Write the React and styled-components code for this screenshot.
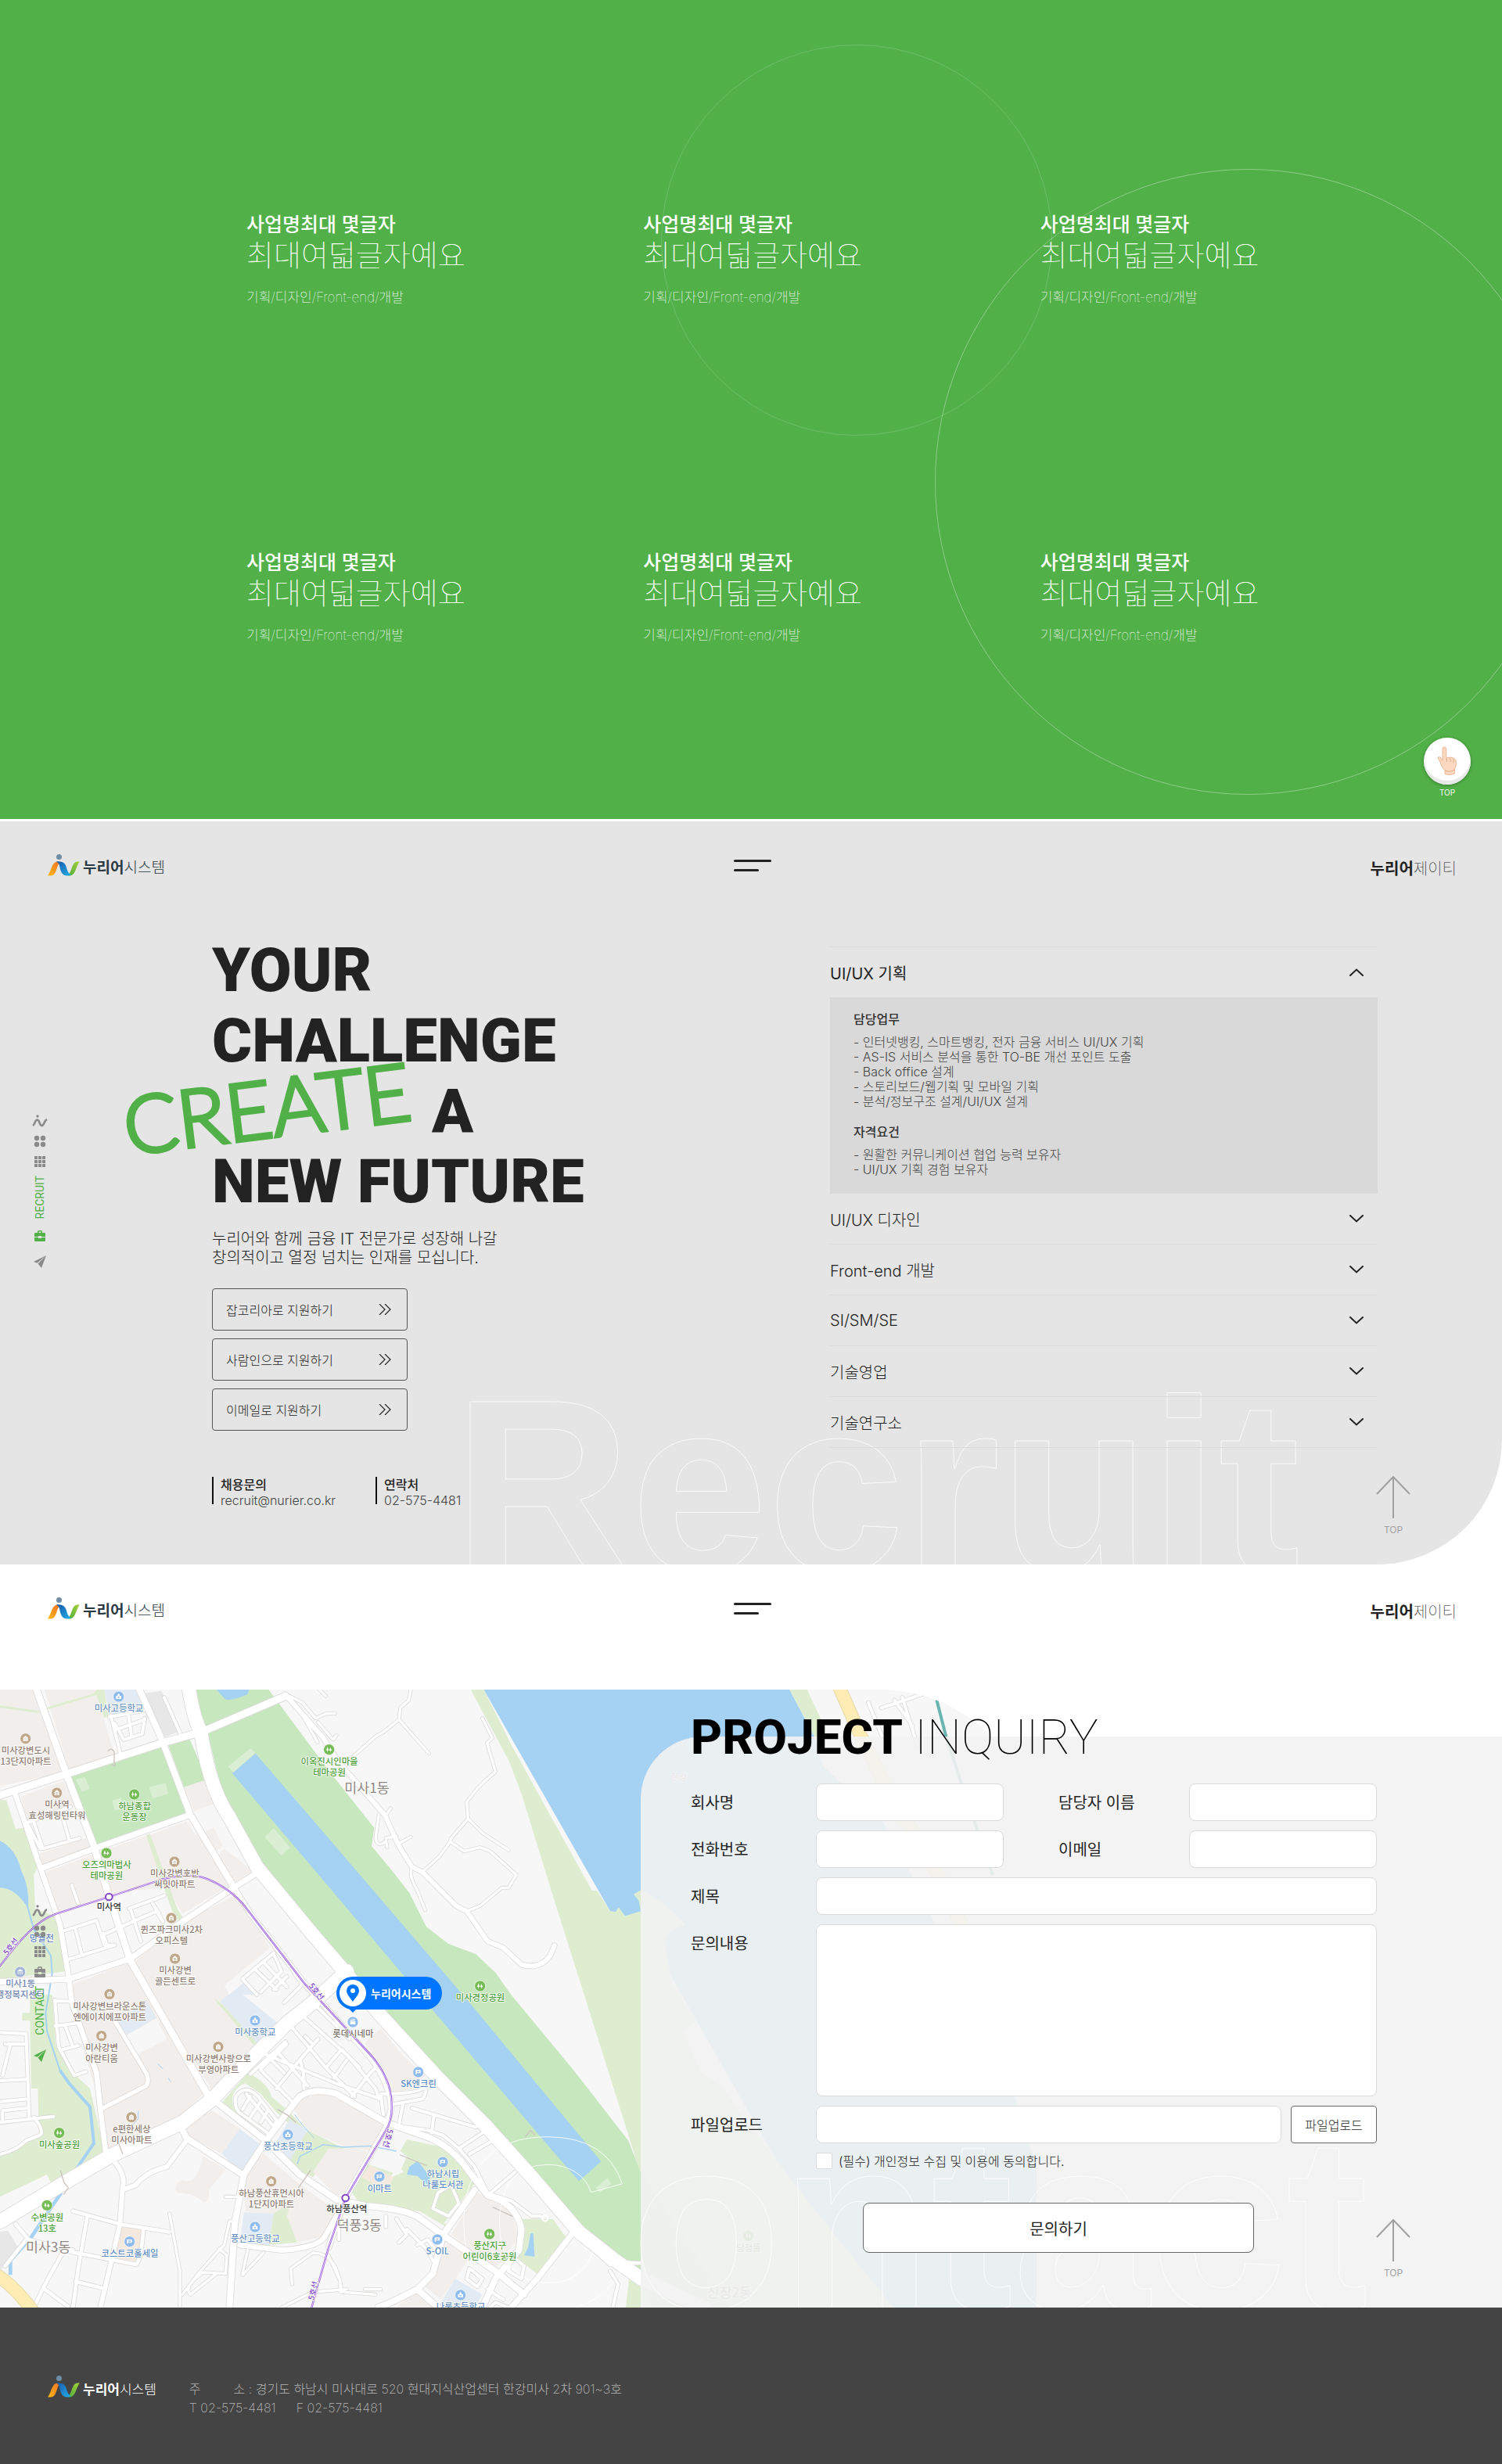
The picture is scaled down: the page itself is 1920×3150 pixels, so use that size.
import React, { useState } from "react";
import styled, { createGlobalStyle, css } from "styled-components";

const GlobalStyle = createGlobalStyle`
  * { box-sizing: border-box; }
  body {
    margin: 0;
    background: #fff;
    color: #222;
    font-family: Inter, "Noto Sans CJK KR", sans-serif;
  }
  h2, h3, p, ul, dl, dd, address { margin: 0; padding: 0; font-style: normal; }
  ul { list-style: none; }
  a { color: inherit; text-decoration: none; }
  button, input, textarea { font: inherit; color: inherit; }
`;

/* ---------- projects ---------- */

const Projects = styled.section`
  position: relative;
  overflow: hidden;
  margin-bottom: 3px;
  padding: 272px 83px 223px 315px;
  background: #51b048;
  color: #fff;
`;

const ProjectGrid = styled.ul`
  position: relative;
  display: grid;
  grid-template-columns: repeat(3, 1fr);
  row-gap: 312px;
`;

const ProjectCard = styled.li`
  display: flex;
  flex-direction: column;
  height: 120px;
`;

const ProjectName = styled.h3`
  font-size: 25px;
  font-weight: 500;
  line-height: 30px;
`;

const ProjectTitle = styled.p`
  font-size: 38px;
  font-weight: 100;
  line-height: 48px;
`;

const ProjectTags = styled.p`
  margin-top: 18px;
  font-size: 17px;
  font-weight: 100;
  line-height: 24px;
`;

const Ring = styled.span`
  position: absolute;
  top: ${(p) => p.$top}px;
  left: ${(p) => p.$left}px;
  width: ${(p) => p.$size}px;
  height: ${(p) => p.$size}px;
  border: 1px solid rgba(255, 255, 255, ${(p) => p.$alpha});
  border-radius: 50%;
`;

const TouchTop = styled.a`
  position: absolute;
  right: 40px;
  bottom: 28px;
  display: flex;
  flex-direction: column;
  align-items: center;
  gap: 4px;
  width: 60px;
  font-size: 10px;
  line-height: 12px;
`;

const TouchDisc = styled.span`
  display: flex;
  align-items: center;
  justify-content: center;
  width: 60px;
  height: 60px;
  border-radius: 50%;
  background: #fff;
  box-shadow: inset 0 -5px 0 #e9e9e9, 0 1px 4px rgba(0, 0, 0, 0.3);
`;

/* ---------- header ---------- */

const Header = styled.header`
  position: relative;
  display: grid;
  grid-template-columns: 1fr auto 1fr;
  align-items: center;
  height: 120px;
  padding: 0 58px 8px 61px;
`;

const Brand = styled.a`
  display: flex;
  align-items: flex-end;
  gap: 4px;
  color: ${(p) => (p.$light ? "#fff" : "#2b3a42")};
  font-size: ${(p) => (p.$light ? 17 : 19)}px;
  font-weight: 300;
  line-height: 20px;
  b { font-weight: 700; }
`;

const MenuButton = styled.button`
  display: flex;
  flex-direction: column;
  gap: 9px;
  width: 48px;
  padding: 0;
  border: 0;
  background: none;
  cursor: pointer;
`;

const MenuBar = styled.span`
  width: ${(p) => p.$w}px;
  height: 3px;
  border-radius: 2px;
  background: #222;
`;

const Partner = styled.a`
  justify-self: end;
  padding-top: 10px;
  font-size: 20px;
  font-weight: 100;
  line-height: 24px;
  b { font-weight: 700; }
`;

/* ---------- side navigation and top link ---------- */

const SideNav = styled.nav`
  position: absolute;
  left: 40px;
  top: ${(p) => p.$top}px;
  z-index: 3;
  display: flex;
  flex-direction: column;
  align-items: center;
  gap: 10px;
  width: 22px;
  color: #8a8a8a;
`;

const SideLink = styled.a`
  display: flex;
  flex-direction: column;
  align-items: center;
  gap: 14px;
  margin-bottom: ${(p) => (p.$active ? 7 : 0)}px;
  color: ${(p) => (p.$active ? "#51b048" : "inherit")};
  svg { display: block; }
  &:last-child { gap: 18px; }
`;

const SideText = styled.span`
  writing-mode: vertical-rl;
  transform: rotate(180deg);
  font-family: Roboto, sans-serif;
  font-size: 14px;
  line-height: 16px;
`;

const TopLink = styled.a`
  position: absolute;
  top: 837px;
  right: 117px;
  z-index: 3;
  display: flex;
  flex-direction: column;
  align-items: center;
  gap: 8px;
  width: 44px;
  color: #a0a0a0;
  font-size: 12px;
  line-height: 14px;
`;

const Watermark = styled.span`
  position: absolute;
  top: ${(p) => p.$top}px;
  left: 580px;
  color: transparent;
  font-family: "Liberation Sans", sans-serif;
  font-size: 314px;
  font-weight: 700;
  line-height: 314px;
  white-space: nowrap;
  pointer-events: none;
  -webkit-text-stroke: 1px rgba(255, 255, 255, 0.85);
`;

/* ---------- recruit ---------- */

const Recruit = styled.section`
  position: relative;
  overflow: hidden;
  min-height: 950px;
  border-bottom-right-radius: 160px;
  background: #e5e5e5;
`;

const RecruitBody = styled.div`
  position: relative;
  display: grid;
  grid-template-columns: 1fr 700px;
  align-items: start;
  padding: 25px 159px 0 271px;
`;

const Slogan = styled.h2`
  display: flex;
  flex-direction: column;
  font-family: Roboto, sans-serif;
  font-size: 78px;
  font-weight: 900;
  line-height: 91px;
`;

const SloganLine = styled.span`
  position: relative;
  height: 90px;
  padding-left: ${(p) => p.$indent || 0}px;
`;

const Handwritten = styled.span`
  position: absolute;
  left: -114px;
  top: -10px;
  color: #51b048;
  font-family: Lato, sans-serif;
  font-size: 102px;
  font-weight: 300;
  line-height: 100px;
  transform: rotate(-7deg);
  -webkit-text-stroke: 5px #51b048;
  stroke-linejoin: round;
`;

const Lead = styled.p`
  margin-top: 17px;
  font-size: 20px;
  font-weight: 300;
  line-height: 24px;
`;

const ApplyList = styled.div`
  display: flex;
  flex-direction: column;
  gap: 10px;
  width: 250px;
  margin-top: 27px;
`;

const ApplyLink = styled.a`
  display: flex;
  align-items: center;
  justify-content: space-between;
  height: 54px;
  padding: 0 20px 0 17px;
  border: 1px solid #555;
  border-radius: 4px;
  font-size: 16px;
  font-weight: 300;
`;

const ContactList = styled.dl`
  display: grid;
  grid-template-columns: 209px 209px;
  margin-top: 59px;
`;

const ContactItem = styled.div`
  position: relative;
  padding-left: 11px;
  font-size: 16px;
  line-height: 20px;
  &::before {
    content: "";
    position: absolute;
    inset: 0 auto 5px 0;
    width: 2px;
    background: #111;
  }
  dt { font-weight: 500; }
  dd { font-weight: 300; color: #444; }
`;

const Accordion = styled.div`
  margin-top: 15px;
  border-top: 1px solid #dbdbdb;
`;

const AccordionButton = styled.button`
  display: flex;
  align-items: center;
  justify-content: space-between;
  width: 100%;
  height: 65px;
  padding: 0 18px 0 0;
  border: 0;
  border-bottom: 1px solid #dbdbdb;
  background: none;
  font-size: 20px;
  font-weight: ${(p) => (p.$open ? 400 : 300)};
  cursor: pointer;
`;

const AccordionPanel = styled.div`
  margin-top: -1px;
  padding: 18px 30px 21px;
  background: #d9d9d9;
  font-size: 16px;
  color: #444;
`;

const PanelTitle = styled.h3`
  font-size: 16px;
  font-weight: 500;
  line-height: 20px;
  color: #333;
  &:not(:first-child) { margin-top: 19px; }
`;

const PanelList = styled.ul`
  margin-top: 10px;
  font-weight: 300;
  line-height: 19px;
`;

/* ---------- contact ---------- */

const Contact = styled.section`
  position: relative;
  overflow: hidden;
`;

const Stage = styled.div`
  position: relative;
  margin-top: 40px;
  padding-top: 60px;
`;

const MapFrame = styled.div`
  position: absolute;
  top: 0;
  left: 0;
  width: 1325px;
  height: 100%;
  overflow: hidden;
  border-top-right-radius: 200px;
  background: #f7f7f7;
  svg { display: block; }
`;

const Marker = styled.a`
  position: absolute;
  left: 430px;
  top: 367px;
  display: flex;
  align-items: center;
  gap: 6px;
  height: 42px;
  padding: 0 14px 0 4px;
  border-radius: 21px;
  background: #0075ff;
  color: #fff;
  font-size: 14px;
  font-weight: 700;
  white-space: nowrap;
  &::after {
    content: "";
    position: absolute;
    left: 16px;
    top: 41px;
    border: 5px solid transparent;
    border-top-color: #0075ff;
    border-bottom: 0;
  }
`;

const MarkerDot = styled.span`
  display: flex;
  align-items: center;
  justify-content: center;
  width: 34px;
  height: 34px;
  border-radius: 50%;
  background: #fff;
`;

const Panel = styled.div`
  position: relative;
  margin-left: 819px;
  padding: 0 160px 70px 64px;
  border-top-left-radius: 80px;
  background: rgba(242, 242, 242, 0.9);
`;

const InquiryTitle = styled.h2`
  position: relative;
  top: -37px;
  margin-bottom: -16px;
  color: #000;
  font-family: Roboto, sans-serif;
  font-size: 62px;
  font-weight: 100;
  line-height: 76px;
  b { font-weight: 800; }
`;

const Form = styled.form`
  position: relative;
  z-index: 2;
`;

const Fields = styled.div`
  display: grid;
  grid-template-columns: 160px 1fr 237px 1fr;
  grid-template-rows: repeat(3, 48px) 220px 48px 20px;
  row-gap: 12px;
`;

const Label = styled.label`
  padding-left: ${(p) => (p.$second ? 70 : 0)}px;
  font-size: 20px;
  font-weight: 400;
  line-height: 50px;
`;

const box = css`
  width: 100%;
  min-width: 0;
  border: 1px solid #dadada;
  border-radius: 8px;
  background: #fff;
  padding: 0 12px;
  font-size: 16px;
  outline: none;
`;

const TextBox = styled.input`
  ${box}
  height: 48px;
  ${(p) => p.$wide && "grid-column: 2 / -1;"}
`;

const TextArea = styled.textarea`
  ${box}
  display: block;
  grid-column: 2 / -1;
  height: 220px;
  padding: 12px;
  resize: none;
`;

const FileRow = styled.div`
  grid-column: 2 / -1;
  display: flex;
  gap: 12px;
`;

const UploadButton = styled.button`
  flex: none;
  width: 110px;
  height: 48px;
  padding: 0;
  border: 1px solid #666;
  border-radius: 4px;
  background: #fff;
  font-size: 16px;
  font-weight: 300;
  cursor: pointer;
`;

const Consent = styled.label`
  grid-column: 2 / -1;
  display: flex;
  align-items: center;
  gap: 8px;
  height: 20px;
  font-size: 16px;
  font-weight: 300;
`;

const Tick = styled.input`
  appearance: none;
  width: 21px;
  height: 21px;
  margin: 0;
  border: 1px solid #dadada;
  border-radius: 2px;
  background: #fff;
  &:checked { background: #51b048; }
`;

const SubmitButton = styled.button`
  display: block;
  width: 500px;
  height: 64px;
  margin: 44px 0 0 220px;
  border: 1px solid #666;
  border-radius: 8px;
  background: #fff;
  font-size: 20px;
  font-weight: 400;
  cursor: pointer;
`;

/* ---------- footer ---------- */

const Footer = styled.footer`
  display: flex;
  align-items: flex-start;
  gap: 42px;
  height: 200px;
  padding: 87px 61px 0;
  background: #444;
`;

const Address = styled.address`
  padding-top: 5px;
  color: #b4b4b4;
  font-size: 16px;
  font-weight: 200;
  line-height: 24px;
`;

const AddressLine = styled.p`
  display: flex;
  gap: ${(p) => p.$gap}px;
`;

/* ---------- drawings ---------- */

const BrandMark = ({ id }) => (
  <svg width="41" height="28" viewBox="0 0 41 28" aria-hidden="true">
    <defs>
      <linearGradient id={id + "o"} x1="0" y1="1" x2="1" y2="0">
        <stop offset="0" stopColor="#fdb913" />
        <stop offset="1" stopColor="#f0702a" />
      </linearGradient>
      <linearGradient id={id + "b"} x1="0" y1="0" x2="1" y2="1">
        <stop offset="0" stopColor="#1c56a7" />
        <stop offset="1" stopColor="#1fb0ea" />
      </linearGradient>
      <linearGradient id={id + "g"} x1="0" y1="1" x2="1" y2="0">
        <stop offset="0" stopColor="#4fae3c" />
        <stop offset="1" stopColor="#a6d13a" />
      </linearGradient>
    </defs>
    <circle cx="14.5" cy="3.5" r="3.5" fill="#6f8ea6" />
    <path d="M0 27.5C5 21 5 9.500 13 9.500L16 10.500C11 13 12 27.500 4 27.500Z" fill={`url(#${id}o)`} />
    <path d="M26 27.500C31 22 31 9.500 38 9.500H41C36 15 36 27.500 28 27.500Z" fill={`url(#${id}g)`} />
    <path d="M11 9.500C20 8.500 23 12 24.500 19C25.200 22 27 25 30 26.500C22 29 18 26.500 16 19C15 14 14.500 11 11 9.500Z" fill={`url(#${id}b)`} />
  </svg>
);

const SideMark = () => (
  <svg width="20" height="16" viewBox="0 0 20 16" fill="none" stroke="currentColor" aria-hidden="true">
    <circle cx="7" cy="2" r="1.700" fill="currentColor" stroke="none" />
    <path d="M1 14C4 12 3.500 7 6.500 6.500C10 6.500 9 14 12.500 14C16 13.500 15 7.500 19 6" strokeWidth="2.600" />
  </svg>
);

const DotsIcon = () => (
  <svg width="16" height="16" viewBox="0 0 16 16" fill="currentColor" aria-hidden="true">
    <circle cx="4" cy="4" r="3.200" /><circle cx="12" cy="4" r="3.200" />
    <circle cx="4" cy="12" r="3.200" /><circle cx="12" cy="12" r="3.200" />
  </svg>
);

const GridIcon = () => (
  <svg width="16" height="16" viewBox="0 0 16 16" fill="currentColor" aria-hidden="true">
    {[0, 1, 2].map((r) => [0, 1, 2].map((c) => (
      <rect key={`${r}${c}`} x={1 + c * 5} y={1 + r * 5} width="4" height="4" />
    )))}
  </svg>
);

const CaseIcon = () => (
  <svg width="16" height="16" viewBox="0 0 16 16" fill="currentColor" aria-hidden="true">
    <path d="M5 4V2.500Q5 1 6.500 1H9.500Q11 1 11 2.500V4H14Q15 4 15 5V9H10V8H6V9H1V5Q1 4 2 4ZM6.500 4H9.500V2.500H6.500Z" fillRule="evenodd" />
    <path d="M1 10H6V11H10V10H15V14Q15 15 14 15H2Q1 15 1 14Z" />
  </svg>
);

const PlaneIcon = () => (
  <svg width="16" height="16" viewBox="0 0 16 16" fill="currentColor" aria-hidden="true">
    <path d="M16 0L0 8L4.500 9.800ZM16 0L5.500 10.500L10 16Z" />
  </svg>
);

const Chevron = ({ up }) => (
  <svg width="18" height="10" viewBox="0 0 18 10" fill="none" stroke="#222" strokeWidth="2" strokeLinecap="round" aria-hidden="true">
    <path d={up ? "M1 9L9 1.500L17 9" : "M1 1L9 8.500L17 1"} />
  </svg>
);

const DoubleArrow = () => (
  <svg width="16" height="14" viewBox="0 0 16 14" fill="none" stroke="#222" strokeWidth="1.200" aria-hidden="true">
    <path d="M1 0L8 7L1 14M8 0L15 7L8 14" />
  </svg>
);

const UpArrow = () => (
  <svg width="44" height="54" viewBox="0 0 44 54" fill="none" stroke="currentColor" strokeWidth="2" aria-hidden="true">
    <path d="M22 54V1M1 23L22 1L43 23" />
  </svg>
);

const Hand = () => (
  <svg width="26" height="38" viewBox="0 0 26 38" aria-hidden="true">
    <path
      d="M7 3Q7 1 9 1Q11.500 1 11.500 3L12 15Q17 13 21 15Q25 17 24.500 22Q24 27 22.500 30V35Q16 38 10 35.500V31Q5 26 4 20L1.500 16Q0.500 13.500 3 13.500Q5 14 7 18Z"
      fill="#fbd9c0"
      stroke="#e9b99a"
      strokeWidth="1"
    />
    <path d="M12 15L12.500 20M16 15Q18 17 17 20M20.500 16Q22 18 21 21M10 31Q16 34 22.500 30" fill="none" stroke="#e3a988" strokeWidth="1" />
  </svg>
);

const PinIcon = () => (
  <svg width="16" height="22" viewBox="0 0 16 22" aria-hidden="true">
    <path d="M8 0A8 8 0 0 1 16 8C16 13 11 17 8 22C5 17 0 13 0 8A8 8 0 0 1 8 0Z" fill="#0075ff" />
    <circle cx="8" cy="8" r="3" fill="#fff" />
  </svg>
);

/* ---------- map ---------- */

const AREAS = [
  ["#a5d2f3", "M1855 30H3028L3123 210L3154 320L3386 540L3500 750L3586 930L3700 1300L3891 1592L3944 1771L3975 1850V2400H3300L2500 1000L2340 880Z"],
  ["#deedcf", "M3028 30H3095L3165 180V220L3123 210Z"],
  ["#deedcf", "M1805 30H1855L1960 240L2120 530L2270 800L2290 802L2340 880L2362 882L2372 865L2398 898L2457 880L2450 840L2430 815L2460 797L2544 850L2628 930L2565 960L2550 1000L2575 1160L2670 1300L2617 1340L2690 1500L2775 1560L2838 1655L2912 1750L3090 1981L3300 2244L3428 2400H2400L2457 1880L2445 1850L2240 1200L2120 820L2000 430L1950 300Z"],
  ["#f2eeeb", "M0 30H135L240 350L0 400Z"],
  ["#f2eeeb", "M170 30H365L440 285L265 335Z"],
  ["#deedcf", "M0 90L150 112V120L0 100ZM180 98L360 45L370 30H400L415 130L400 140L370 50L185 106Z"],
  ["#e2eaf3", "M400 30H530L545 100L420 130Z"],
  ["#e7e7e7", "M545 45L620 35L690 190L625 215L560 130Z"],
  ["#c7e7be", "M270 365L620 250L720 500L365 625Z"],
  ["#d9eed2", "M290 375L325 365L345 410L315 422ZM572 405L635 388L645 430L585 448ZM430 455L465 445L475 485L440 495Z"],
  ["#c7e7be", "M645 240L725 215L795 375L705 405Z"],
  ["#f2eeeb", "M705 405L790 375L830 465L745 495Z"],
  ["#c7e7be", "M740 30H1030L1260 340L1435 560L1425 630L1500 720L1570 810L1635 940L1720 1005L1825 1045L1900 1115L1960 1200L2200 1490L2410 1760L2457 1880L2800 2400H2500L2457 2260L2360 2220L2240 2120L2060 1900L1840 1680L1660 1500L1460 1260L1320 1090L1130 870L980 700L870 500L800 210L760 130Z"],
  ["#a5d2f3", "M830 30H955L950 48Q880 78 862 65Z"],
  ["#a5d2f3", "M890 350L980 275L1260 600L1800 1230L2305 1840L2220 1915L2120 1800L1660 1260L1260 785Z"],
  ["#d9eed2", "M875 325L960 255L980 272L895 348ZM1015 595L1050 562L1113 635L1078 667ZM2285 1940L2330 1903L2345 1925L2300 1960Z"],
  ["#deedcf", "M0 450L25 455L60 565L95 560L150 700L130 740L135 870L215 900L262 1110L0 1140Z"],
  ["#a5d2f3", "M0 610Q60 640 80 720Q115 790 108 870Q60 790 0 790Z"],
  ["#deedcf", "M115 1200H200L215 1400L290 1510L345 1560L400 1800L200 1930L180 1890L0 1975V1810L150 1740L145 1560H120L115 1300H85V1270H115Z"],
  ["#e7e7e7", "M0 2110L30 2105L70 2170L0 2260Z"],
  ["#f2eeeb", "M80 440L245 380L290 480L105 540Z"],
  ["#f2eeeb", "M150 660L330 600L345 640L155 710Z"],
  ["#f2eeeb", "M175 730L390 650L560 590L650 790L500 800L225 880Z"],
  ["#f2eeeb", "M570 590L715 535L880 780L700 890L650 800Z"],
  ["#f2eeeb", "M740 590L820 560L855 630L790 680ZM860 640L970 725L895 770L810 690Z"],
  ["#deedcf", "M560 588L575 583L680 870L860 1165L845 1175L660 880Z"],
  ["#f2eeeb", "M510 1080L690 930L905 815L1035 1020L860 1165L985 1400L810 1560L580 1200Z"],
  ["#f2eeeb", "M280 1160L490 1080L560 1200L780 1580L680 1680L415 1790L385 1640L280 1250Z"],
  ["#e2eaf3", "M450 1310L560 1220L600 1290L485 1355Z"],
  ["#f7f7f7", "M485 1355L600 1290L640 1370L525 1430Z"],
  ["#e2eaf3", "M845 1225L905 1180L1080 1320L990 1395ZM880 1200L940 1150L985 1200Z"],
  ["#deedcf", "M820 1215L850 1235L990 1390L980 1402ZM950 1500Q1030 1540 1040 1590L1110 1650L1200 1750L1180 1760L1060 1650L1000 1580L940 1540Q870 1570 900 1640L980 1690L970 1700L850 1615Z"],
  ["#f2eeeb", "M700 1700L810 1640L920 1715L850 1810L725 1745Z"],
  ["#e2eaf3", "M920 1715L1005 1780L930 1890L850 1810Z"],
  ["#f2eeeb", "M780 1820L865 1870L800 1950Q810 1990 780 1998Q750 1960 680 1960Q660 1930 700 1910Q740 1930 760 1880Z"],
  ["#f2eeeb", "M1010 1810L1140 1920L1100 2050L940 2030V1880Z"],
  ["#e2eaf3", "M935 2035L1050 2040L1030 2160H920Z"],
  ["#deedcf", "M1100 2005L1140 2150L1030 2160L1050 2040Z"],
  ["#f2eeeb", "M1140 1920L1290 2030L1230 2130L1140 2150L1100 2050Z"],
  ["#f2eeeb", "M1120 1630L1170 1570Q1220 1560 1320 1610L1480 1690L1440 1800L1340 1790L1180 1720Z"],
  ["#deedcf", "M1180 1720L1320 1790L1250 1840L1200 1900L1110 1860L1040 1800L1060 1790Z"],
  ["#e2eaf3", "M1110 1680L1180 1720L1110 1840L1050 1780Z"],
  ["#f2eeeb", "M1200 1880L1260 1790L1360 1790L1410 1800L1320 1960L1290 1970Z"],
  ["#f2eeeb", "M1400 1385L1460 1330L1550 1440L1630 1510L1590 1560L1500 1575L1480 1500Z"],
  ["#deedcf", "M1560 1755L1720 1790L1820 1920L1870 1990L1710 2090L1610 2030L1380 2000L1350 1960L1410 1850L1530 1890L1560 1820L1535 1800Z"],
  ["#f7f7f7", "M1520 1850L1550 1880L1500 1900ZM1820 1925L1870 1950L1780 2060L1700 2080Z"],
  ["#f3e9df", "M1420 1855L1510 1900L1485 1955L1385 1900Z"],
  ["#a5d2f3", "M1570 1860L1600 1838L1612 1850L1650 1900L1640 1930L1600 1895L1560 1890Z"],
  ["#f2eeeb", "M1830 1960L1960 2030L1990 2130L1900 2250L1730 2120Z"],
  ["#deedcf", "M2000 2060H2120L2170 2130L2060 2270L1980 2210Z"],
  ["#a5d2f3", "M2035 2115H2045L2050 2205L2010 2200L2025 2170Z"],
  ["#f2eeeb", "M1720 2150L1800 2210L1690 2370L1620 2310Z"],
  ["#f2eeeb", "M1520 2400L1600 2330L1700 2400Z"],
  ["#e2eaf3", "M1745 2290L1850 2350L1820 2400H1680Z"],
  ["#f4e9df", "M465 2085L548 2100L525 2225L440 2210Z"],
];

const STREAMS = [
  [6, "M105 860L130 950L195 1050L200 1120L175 1270L180 1340L230 1490"],
  [12, "M230 1490L265 1540L345 1630L360 1770L285 1880"],
  [14, "M235 1960L200 2010L120 2130L40 2220V2275"],
  [4, "M1140 1850L1150 1820L1240 1775L1320 1785L1420 1780L1520 1800"],
  [3, "M1130 1660L1160 1700L1205 1750M530 1645V1675L500 1710M605 1465L625 1485M645 1520L655 1535"],
];

const ROADS = [
  [10, "M1575 30L1568 70L1535 100L1530 145L1475 190L1440 210L1350 290M1530 145L1645 275M1850 140L1888 215L1868 235L1900 345L1865 375L1830 410L1790 460L1795 525L1730 600L1725 615L1685 670L1620 730M1795 525L1850 580L1950 645M1728 615L1780 650L1840 635L1880 650L1980 740L1950 790L1925 790L1840 860L1790 880M1580 710Q1565 740 1600 800L1630 875M1453 510L1440 600Q1450 640 1480 610L1485 635M1480 600L1520 592M1530 620L1575 595M1475 520L1498 485M1280 220L1290 205"],
  [10, "M1100 50L1150 110L1218 232M1110 55L1160 80L1210 140L1250 122H1285M1225 30L1250 55M1220 155L1275 220"],
  [12, "M425 130L462 275M420 135L550 110M450 182L555 145M440 160L475 222L545 200L555 140M492 125L505 210M630 60L690 195"],
  [12, "M105 545L155 640M130 540L165 640L305 600M105 540L270 480M235 500L265 605"],
  [12, "M245 955L370 915L400 1010H440M262 1065L440 1010M290 950L315 1050M395 970L600 880L625 920M500 870L540 995M495 870L630 820M585 850L610 890M395 965L410 1010M275 780L300 850"],
  [12, "M930 1140L1050 1040M930 1140L985 1200M1050 1045L1080 1110L1000 1190M975 1100L1060 1180M1010 1075L1100 1170M1130 1120L1160 1160L1090 1230M1100 1130L1050 1180"],
  [12, "M0 1345L100 1350L112 1670M0 1530L105 1525M20 1390H100M40 1390L10 1510M0 1610L105 1600M10 1645L105 1635M0 1690L205 1667M10 1645V1690M130 1670Q170 1720 155 1738L100 1760Q60 1800 0 1812"],
  [12, "M210 1220L225 1400L285 1510L330 1495M210 1225H280M212 1320L290 1310M235 1412L300 1395M250 1320L280 1400"],
  [12, "M1115 1320L1250 1480L1360 1590M1160 1280L1340 1440M1000 1490L1130 1620M960 1505L1095 1380M1000 1485L1065 1420L1180 1550M1060 1560L1150 1450M1020 1430L1300 1545L1460 1600M1165 1560Q1170 1500 1150 1450L1220 1370M1200 1390L1170 1360M1250 1480L1310 1410L1380 1480M1100 1390L1040 1450L1090 1500M1220 1250L1340 1370M1200 1230L1130 1310M1330 1430L1440 1560L1450 1590M1280 1520L1330 1450M1350 1590L1420 1500L1440 1480"],
  [12, "M905 1590Q940 1540 990 1590L1060 1680L1040 1740L915 1650Q895 1620 905 1590ZM930 1640L960 1590M960 1670L1000 1610M1000 1690L1030 1640M945 1580L1045 1700"],
  [12, "M1470 1580Q1620 1580 1630 1550Q1640 1570 1620 1600L1500 1622M1545 1620L1530 1700M1460 1580L1470 1660M1580 1635L1825 1708M1665 1660L1655 1730M1500 1700L1640 1720L1700 1740L1760 1790L1850 1730M1760 1790L1820 1860L1875 1970M1800 1812L1880 1765M1882 1960L1975 1880M1880 1965L1960 1990L2040 2050H2075"],
  [12, "M1480 2050V2090M1300 2090V2140M1520 2060L1560 2120L1530 2150M1560 2100L1640 2180L1660 2220M1600 2160L1640 2140L1680 2190M1430 1490M1730 1930L1680 1960L1660 2020L1720 2050L1760 2000ZM1800 2250L1850 2290L1830 2320L1790 2290ZM1960 2200L2010 2240L2000 2290L1950 2260ZM1870 2330L1930 2370M1900 2260L1980 2330"],
  [10, "M865 1975H920M900 2065L880 2070L860 2160L840 2180L760 2270L700 2350M840 2175L870 2200L865 2270L780 2265Q700 2320 730 2350L830 2270M950 2180L930 2270M1010 2190L930 2275M1120 2310L1115 2250L1200 2190Q1290 2190 1310 2330M650 2040L690 2260V2400M1080 2400L1200 2340L1330 2330M1400 2330L1460 2330M1260 2200L1305 2300V2340L1440 2350"],
  [14, "M280 2030L460 2080L650 2110M240 2180L420 2215L520 2235Q540 2230 550 2100M335 2050L300 2250L280 2400M290 2300L390 2325M165 2325L240 2190M130 2400L165 2325L260 2395M60 2080L110 2140L280 2180M100 2140L20 2240"],
  [12, "M1880 2400L1900 2380L1950 2400M2340 2260L2370 2310L2350 2400M2340 2230H2457M2340 2222L2457 2230"],
  [18, "M1095 50L1240 215L1300 310L1475 510L1530 630L1580 710L1620 730L1750 860L1790 880L1870 995L1930 1020L2000 1085Q2070 1105 2110 1050L2126 1012"],
  [18, "M430 1830Q485 1890 470 1940L460 2080L430 2210L385 2400M480 1945L520 1930Q560 1880 640 1860L715 1760"],
  [16, "M385 1640L560 1550Q575 1530 560 1500L440 1300"],
  [20, "M60 435L150 700L230 930L265 1140L275 1230L370 1500L385 1640L405 1800"],
  [20, "M920 2160L1080 2180Q1230 2170 1250 2120L1290 2050L1320 1980"],
  [22, "M0 1150L265 1140L500 1062L700 920L895 790L990 730"],
  [22, "M160 715L360 640L730 510"],
  [20, "M895 785Q930 840 960 890L1170 1160L1420 1440Q1500 1550 1500 1640L1480 1710L1325 1980L1260 2170"],
  [24, "M535 30L620 220L730 510L895 785"],
  [28, "M0 435L250 355L620 235L780 190L1095 55"],
  [26, "M140 30L255 355L360 630L420 830L500 1070L800 1590"],
  [24, "M690 1700L715 1750L930 1890M880 2400L900 2080L935 1890L1020 1760L1095 1660L1150 1590Q1200 1555 1290 1580L1480 1690L1650 1750Q1740 1790 1800 1880L1870 1970Q1980 2000 2000 2100L1990 2180L1900 2290L1850 2400"],
  [24, "M815 1600L1020 1760L1150 1890L1290 1985L1400 2010Q1540 2020 1600 2050L1710 2130L1900 2260L2010 2350M1700 2120L1820 1950M1700 2120L1660 2270L1600 2330L1500 2380L1450 2400M1600 2330L1680 2400"],
  [22, "M2200 2110L2060 2290L1960 2400M2340 2230L2220 2120"],
  [52, "M725 30Q745 150 770 190Q800 400 880 520L985 710L1200 970L1320 1110L1460 1280L1680 1520L1860 1700L2040 1900L2220 2110L2360 2220L2460 2290L2700 2400"],
  [54, "M0 2070L250 1920L420 1820L700 1690L815 1600L900 1510L1100 1310L1200 1230L1330 1110"],
  [12, "M3430 70L3500 170M3380 100L3560 40M3330 80L3420 300M3460 60L3520 250"],
];

const SUBWAY =
  "M0 1090Q60 1010 110 960Q160 910 215 890L418 825L600 765Q680 735 770 748Q860 775 930 850L1170 1160L1420 1430Q1500 1520 1502 1620Q1505 1680 1480 1720L1325 1980L1260 2170L1195 2400";

const PLACES = [
  ["home", 98, 218, "미사강변도시", "13단지아파트"],
  ["school", 455, 57, "미사고등학교"],
  ["home", 218, 426, "미사역", "효성해링턴타워"],
  ["park", 515, 432, "하남종합", "운동장"],
  ["park", 408, 657, "오즈의마법사", "테마공원"],
  ["home", 669, 690, "미사강변호반", "써밋아파트"],
  ["home", 657, 906, "퀸즈파크미사2차", "오피스텔"],
  ["home", 671, 1062, "미사강변", "골든센트로"],
  ["park", 1262, 260, "이옥진시인마을", "테마공원"],
  ["office", 77, 1113, "미사1동", "행정복지센터"],
  ["home", 420, 1198, "미사강변브라운스톤", "엔에이치에프아파트"],
  ["home", 389, 1358, "미사강변", "아란티움"],
  ["school", 978, 1299, "미사중학교"],
  ["home", 837, 1400, "미사강변사랑으로", "부영아파트"],
  ["park", 227, 1730, "미사숲공원"],
  ["home", 504, 1670, "e편한세상", "미사아파트"],
  ["park", 180, 2008, "수변공원", "13호"],
  ["blue", 497, 2147, "코스트코홀세일"],
  ["school", 1104, 1737, "풍산초등학교"],
  ["home", 1040, 1916, "하남풍산휴먼시아", "1단지아파트"],
  ["school", 978, 2091, "풍산고등학교"],
  ["cinema", 1353, 1305, "롯데시네마"],
  ["blue", 1604, 1497, "SK엔크린"],
  ["blue", 1698, 1842, "하남시립", "나룰도서관"],
  ["blue", 1455, 1898, "이마트"],
  ["blue", 1677, 2139, "S-OIL"],
  ["park", 1877, 2118, "풍산지구", "어린이6호공원"],
  ["school", 1766, 2352, "나룰초등학교"],
  ["park", 1841, 1167, "미사경정공원"],
  ["park", 2870, 2125, "당정뜰"],
];

const PLACE_COLORS = {
  home: ["#bfa789", "#8f7c74"],
  school: ["#8fbcec", "#6b93c4"],
  park: ["#75bb56", "#4f9d3c"],
  office: ["#a3b4d6", "#7286b4"],
  blue: ["#8fbcec", "#5f8fc4"],
  cinema: ["#8fbcec", "#7d726c"],
};

const GLYPHS = {
  home: "M-9 9V-4L0 -11L9 -4V9ZM-5 -3V-1H5V-3ZM-5 3V5H5V3Z",
  school: "M-10 9V-3H-4V-8L0 -12L4 -8V-3H10V9ZM-3 0V5H3V0Z",
  park: "M-6 -11L-1 3H-5V9H-7V3H-11ZM5 -8L11 4H6V9H4V4H0Z",
  office: "M-11 -4L0 -11L11 -4V-2H-11ZM-9 0H-6V8H-9ZM-2 0H2V8H-2ZM6 0H9V8H6Z",
  blue: "M-10 -8H9V4H-6V8H-10ZM-5 -4V0H4V-4Z",
  cinema: "M-10 -9L8 -11V-7L-10 -5ZM-10 -4H10V9H-10Z",
};

const MapText = styled.text`
  font-family: "Noto Sans CJK KR", sans-serif;
  font-size: ${(p) => p.$size || 34}px;
  font-weight: ${(p) => p.$weight || 500};
  text-anchor: middle;
  fill: ${(p) => p.$color};
  stroke: #fff;
  stroke-width: 5px;
  stroke-linejoin: round;
  paint-order: stroke;
`;

const AreaMap = () => (
  <svg width="1325" height="790" viewBox="0 30 3975 2370" role="img" aria-label="누리어시스템 주변 지도">
    {AREAS.map(([fill, d], i) => <path key={i} fill={fill} d={d} />)}
    <g fill="none" stroke="#a5d2f3" strokeLinejoin="round">
      {STREAMS.map(([w, d], i) => <path key={i} strokeWidth={w} d={d} />)}
    </g>
    <g fill="none" strokeLinecap="round" strokeLinejoin="round">
      {ROADS.map(([w, d], i) => <path key={i} stroke="#dcdad8" strokeWidth={w + 5} d={d} />)}
      {ROADS.map(([w, d], i) => <path key={i} stroke="#fff" strokeWidth={w} d={d} />)}
      <circle cx="2090" cy="2057" r="11" stroke="#fff" strokeWidth="7" />
      <path stroke="#e6d9a6" strokeWidth="52" d="M3218 20L3302 210L3396 400L3596 740L3700 960M-20 2270Q60 2320 130 2420" />
      <path stroke="#fdedb4" strokeWidth="46" d="M3218 20L3302 210L3396 400L3596 740L3700 960M-20 2270Q60 2320 130 2420" />
      <path stroke="#6bb5b0" strokeWidth="12" strokeLinecap="butt" d="M3592 70L3628 210L3700 430L3807 740" />
      <path stroke="#ccc4bf" strokeWidth="4" d="M415 265Q430 250 438 270V310Q450 330 430 318M232 1875L245 1920L262 1940L245 1965M455 1770L470 1810M1065 1640L1100 1660L1135 1690M1190 1875L1145 1940M1535 1815L1635 1855M1890 2015L1965 2050M2015 1745L2035 1720L2050 1738" />
      <path stroke="#9b5fe0" strokeWidth="7" d={SUBWAY} />
      <path stroke="#fff" strokeWidth="2" d={SUBWAY} />
    </g>
    <g fill="#fff" stroke="#8246c8" strokeWidth="6">
      <circle cx="418" cy="825" r="13" />
      <circle cx="1325" cy="1980" r="13" />
    </g>
    {[[50, 1022, -52], [1205, 1195, 52], [1478, 1748, 105], [1212, 2338, -76]].map(([x, y, r]) => (
      <MapText key={x} $size={30} $color="#8246c8" transform={`translate(${x} ${y}) rotate(${r})`}>5호선</MapText>
    ))}
    {PLACES.map(([kind, x, y, ...lines]) => (
      <g key={x + "-" + y}>
        <circle cx={x} cy={y} r="21" fill={PLACE_COLORS[kind][0]} stroke="#fff" strokeWidth="2" />
        <path transform={`translate(${x} ${y})`} fill="#fff" fillRule="evenodd" d={GLYPHS[kind]} />
        {lines.map((t, i) => (
          <MapText key={t} x={x + 1} y={y + 58 + i * 42} $color={PLACE_COLORS[kind][1]}>{t}</MapText>
        ))}
      </g>
    ))}
    <MapText x="418" y="877" $color="#333">미사역</MapText>
    <MapText x="1330" y="2033" $color="#333">하남풍산역</MapText>
    <MapText x="160" y="996" $color="#5f86bd">망월천</MapText>
    <MapText x="2603" y="378" $color="#9a8f8f">한강</MapText>
    {[[1407, 427, "미사1동"], [185, 2187, "미사3동"], [1378, 2102, "덕풍3동"], [2797, 2360, "신장2동"]].map(([x, y, t]) => (
      <MapText key={t} x={x} y={y} $size={52} $weight={400} $color="#8f8683">{t}</MapText>
    ))}
  </svg>
);

/* ---------- shared blocks ---------- */

const SiteHeader = ({ id }) => (
  <Header>
    <Brand href="#home">
      <BrandMark id={id} />
      <span><b>누리어</b>시스템</span>
    </Brand>
    <MenuButton type="button" aria-label="메뉴">
      <MenuBar $w={48} />
      <MenuBar $w={32} />
    </MenuButton>
    <Partner href="#jt"><b>누리어</b>제이티</Partner>
  </Header>
);

const SIDE_ITEMS = [
  ["home", SideMark],
  ["business", DotsIcon],
  ["project", GridIcon],
  ["recruit", CaseIcon],
  ["contact", PlaneIcon],
];

const SideMenu = ({ active, top }) => (
  <SideNav $top={top} aria-label="섹션">
    {SIDE_ITEMS.map(([name, Icon]) => (
      <SideLink key={name} href={`#${name}`} $active={name === active} aria-label={name}>
        {name === active && <SideText>{name.toUpperCase()}</SideText>}
        <Icon />
      </SideLink>
    ))}
  </SideNav>
);

const JOBS = [
  {
    title: "UI/UX 기획",
    duties: [
      "인터넷뱅킹, 스마트뱅킹, 전자 금융 서비스 UI/UX 기획",
      "AS-IS 서비스 분석을 통한 TO-BE 개선 포인트 도출",
      "Back office 설계",
      "스토리보드/웹기획 및 모바일 기획",
      "분석/정보구조 설계/UI/UX 설계",
    ],
    needs: ["원활한 커뮤니케이션 협업 능력 보유자", "UI/UX 기획 경험 보유자"],
  },
  { title: "UI/UX 디자인" },
  { title: "Front-end 개발" },
  { title: "SI/SM/SE" },
  { title: "기술영업" },
  { title: "기술연구소" },
];

export default function App() {
  const [open, setOpen] = useState(0);
  return (
    <>
      <GlobalStyle />
      <Projects id="project">
        <Ring $top={57} $left={845} $size={500} $alpha={0.16} />
        <Ring $top={216} $left={1195} $size={800} $alpha={0.35} />
        <ProjectGrid>
          {[0, 1, 2, 3, 4, 5].map((i) => (
            <ProjectCard key={i}>
              <ProjectName>사업명최대 몇글자</ProjectName>
              <ProjectTitle>최대여덟글자예요</ProjectTitle>
              <ProjectTags>기획/디자인/Front-end/개발</ProjectTags>
            </ProjectCard>
          ))}
        </ProjectGrid>
        <TouchTop href="#home">
          <TouchDisc><Hand /></TouchDisc>
          TOP
        </TouchTop>
      </Projects>

      <Recruit id="recruit">
        <Watermark $top={693} aria-hidden="true">Recruit</Watermark>
        <SiteHeader id="r" />
        <SideMenu active="recruit" top={375} />
        <RecruitBody>
          <div>
            <Slogan>
              <SloganLine>YOUR</SloganLine>
              <SloganLine>CHALLENGE</SloganLine>
              <SloganLine $indent={281}><Handwritten>CREATE</Handwritten>A</SloganLine>
              <SloganLine>NEW FUTURE</SloganLine>
            </Slogan>
            <Lead>
              누리어와 함께 금융 IT 전문가로 성장해 나갈<br />
              창의적이고 열정 넘치는 인재를 모십니다.
            </Lead>
            <ApplyList>
              {["잡코리아로 지원하기", "사람인으로 지원하기", "이메일로 지원하기"].map((t) => (
                <ApplyLink key={t} href="#apply">{t}<DoubleArrow /></ApplyLink>
              ))}
            </ApplyList>
            <ContactList>
              <ContactItem><dt>채용문의</dt><dd>recruit@nurier.co.kr</dd></ContactItem>
              <ContactItem><dt>연락처</dt><dd>02-575-4481</dd></ContactItem>
            </ContactList>
          </div>
          <Accordion>
            {JOBS.map((job, i) => (
              <div key={job.title}>
                <AccordionButton
                  type="button"
                  $open={open === i}
                  aria-expanded={open === i}
                  onClick={() => setOpen(open === i ? -1 : i)}
                >
                  {job.title}
                  <Chevron up={open === i} />
                </AccordionButton>
                {open === i && job.duties && (
                  <AccordionPanel>
                    <PanelTitle>담당업무</PanelTitle>
                    <PanelList>{job.duties.map((t) => <li key={t}>- {t}</li>)}</PanelList>
                    <PanelTitle>자격요건</PanelTitle>
                    <PanelList>{job.needs.map((t) => <li key={t}>- {t}</li>)}</PanelList>
                  </AccordionPanel>
                )}
              </div>
            ))}
          </Accordion>
        </RecruitBody>
        <TopLink href="#home"><UpArrow />TOP</TopLink>
      </Recruit>

      <Contact id="contact">
        <SiteHeader id="c" />
        <SideMenu active="contact" top={435} />
        <Stage>
          <MapFrame>
            <AreaMap />
            <Marker href="#map">
              <MarkerDot><PinIcon /></MarkerDot>
              누리어시스템
            </Marker>
          </MapFrame>
          <Panel>
            <InquiryTitle><b>PROJECT</b> INQUIRY</InquiryTitle>
            <Form onSubmit={(e) => e.preventDefault()}>
              <Fields>
                <Label htmlFor="company">회사명</Label>
                <TextBox id="company" />
                <Label htmlFor="manager" $second>담당자 이름</Label>
                <TextBox id="manager" />
                <Label htmlFor="phone">전화번호</Label>
                <TextBox id="phone" type="tel" />
                <Label htmlFor="email" $second>이메일</Label>
                <TextBox id="email" type="email" />
                <Label htmlFor="subject">제목</Label>
                <TextBox id="subject" $wide />
                <Label htmlFor="message">문의내용</Label>
                <TextArea id="message" />
                <Label htmlFor="file">파일업로드</Label>
                <FileRow>
                  <TextBox id="file" readOnly />
                  <UploadButton type="button">파일업로드</UploadButton>
                </FileRow>
                <Consent>
                  <Tick type="checkbox" />
                  (필수) 개인정보 수집 및 이용에 동의합니다.
                </Consent>
              </Fields>
              <SubmitButton type="submit">문의하기</SubmitButton>
            </Form>
          </Panel>
          <Watermark $top={526} aria-hidden="true">Contact</Watermark>
        </Stage>
        <TopLink href="#home"><UpArrow />TOP</TopLink>
      </Contact>

      <Footer>
        <Brand href="#home" $light>
          <BrandMark id="f" />
          <span><b>누리어</b>시스템</span>
        </Brand>
        <Address>
          <AddressLine $gap={42}>
            <span>주</span>
            <span>소 : 경기도 하남시 미사대로 520 현대지식산업센터 한강미사 2차 901~3호</span>
          </AddressLine>
          <AddressLine $gap={26}>
            <span>T 02-575-4481</span>
            <span>F 02-575-4481</span>
          </AddressLine>
        </Address>
      </Footer>
    </>
  );
}
